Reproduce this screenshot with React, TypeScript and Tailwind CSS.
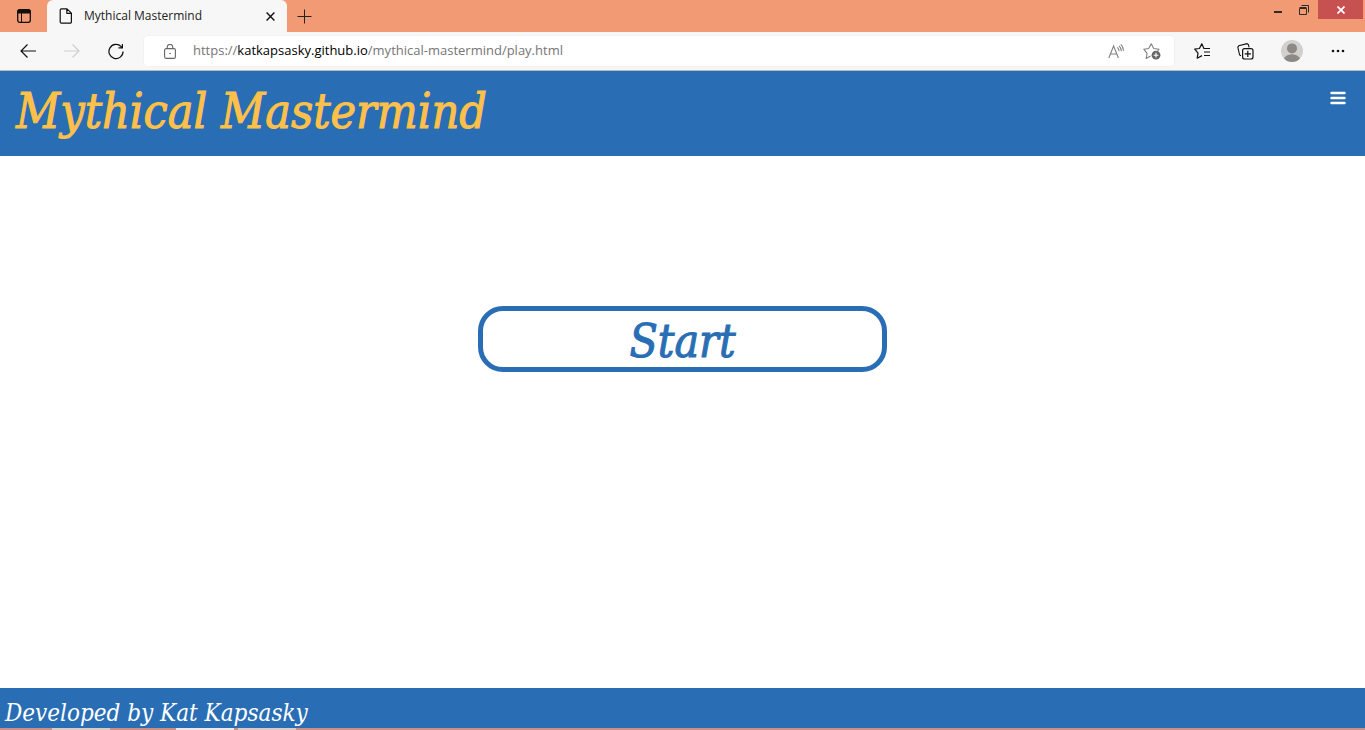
import React from "react";

const displayFont = "font-['DejaVu_Serif_Condensed','DejaVu_Serif',serif] italic";

function TabStrip() {
  return (
    <div className="flex h-8 items-stretch bg-[#f19a74]">
      <button type="button" aria-label="Tab actions" className="flex w-[47px] items-center justify-center rounded-br">
        <svg width="14" height="14" viewBox="0 0 14 14" fill="none" stroke="#111">
          <rect x="0.7" y="0.7" width="12.6" height="12.6" rx="2" strokeWidth="1.3" />
          <path d="M1 1h12v3H1z" fill="#111" />
          <path d="M4.5 4v9" />
        </svg>
      </button>
      <div className="flex w-60 items-center rounded-t-md bg-[#f7f7f7] pl-3 pr-[9px]">
        <svg width="14" height="16" viewBox="0 0 14 16" fill="none" stroke="#111" strokeWidth="1.2" strokeLinejoin="round">
          <path d="M3 .8h5l4.4 4.4V14a1.2 1.2 0 0 1-1.2 1.2H2.4A1.2 1.2 0 0 1 1.2 14V2A1.2 1.2 0 0 1 2.4.8zM7.8.8v4.5h4.6" />
        </svg>
        <span className="ml-[11px] flex-1 text-xs">Mythical Mastermind</span>
        <button type="button" aria-label="Close tab" className="flex size-4 items-center justify-center">
          <svg width="9" height="9" viewBox="0 0 9 9" stroke="#111" strokeWidth="1.4">
            <path d="M.6.6l7.8 7.8M8.4.6L.6 8.4" />
          </svg>
        </button>
      </div>
      <button type="button" aria-label="New tab" className="flex w-[35px] items-center justify-center">
        <svg width="15" height="15" viewBox="0 0 15 15" stroke="#222">
          <path d="M7.5 0.5v14M.5 7.5h14" />
        </svg>
      </button>
      <div className="ml-auto flex h-[19px] items-stretch pr-0.5">
        <button type="button" aria-label="Minimize" className="flex w-7 items-center justify-center">
          <svg width="8" height="11" viewBox="0 0 8 11" fill="#2b2b2b">
            <path d="M0 7h8v2H0z" />
          </svg>
        </button>
        <button type="button" aria-label="Restore" className="flex w-6 items-center justify-center">
          <svg width="10" height="10" viewBox="0 0 10 10" fill="none" stroke="#2b2b2b">
            <path d="M.5 3.5h7v6h-7zM.5 2.5h7M2.5.5h7v7" />
          </svg>
        </button>
        <button type="button" aria-label="Close window" className="ml-0.5 flex w-[45px] items-center justify-center bg-[#c75050]">
          <svg width="8" height="8" viewBox="0 0 8 8" stroke="white" strokeWidth="1.7">
            <path d="M.5.5l7 7M7.5.5l-7 7" />
          </svg>
        </button>
      </div>
    </div>
  );
}

function Toolbar() {
  return (
    <div className="flex h-[39px] items-center border-b border-[#b8bcc0] bg-[#f7f7f7]">
      <div className="flex w-36 items-center gap-7 pl-5">
        <button type="button" aria-label="Back">
          <svg width="16" height="14" viewBox="0 0 16 14" fill="none" stroke="#111" strokeWidth="1.2">
            <path d="M16 7H1M7.5.5L1 7l6.5 6.5" />
          </svg>
        </button>
        <button type="button" aria-label="Forward" disabled>
          <svg width="16" height="14" viewBox="0 0 16 14" fill="none" stroke="#cfcfcf" strokeWidth="1.2">
            <path d="M0 7h15M8.5.5L15 7l-6.5 6.5" />
          </svg>
        </button>
        <button type="button" aria-label="Refresh">
          <svg width="16" height="17" viewBox="0 0 17 17" fill="none" stroke="#111" strokeWidth="1.3">
            <path d="M16 8.5A7.5 7.5 0 1 1 14 3.4l1 1.1M15.3.5v4.2h-4.2" />
          </svg>
        </button>
      </div>
      <div className="flex h-[30px] min-w-0 flex-1 items-center rounded bg-white pl-5 pr-[13px] shadow-[0_0_2px_rgba(0,0,0,0.08)]">
        <svg width="12" height="15" viewBox="0 0 12 15" fill="none" stroke="#666" strokeWidth="1.1" className="shrink-0">
          <rect x=".6" y="4.6" width="10.8" height="9.8" rx="1.5" />
          <path d="M3.2 4.6V3.2a2.8 2.8 0 0 1 5.6 0v1.4" />
          <circle cx="6" cy="9.5" r=".8" fill="#666" stroke="none" />
        </svg>
        <a href="#play" className="ml-[17px] text-[13px] text-[#767676]">
          https://<span className="text-black">katkapsasky.github.io</span>/mythical-mastermind/play.html
        </a>
        <button type="button" aria-label="Read aloud" className="ml-auto">
          <svg width="17" height="15" viewBox="0 0 17 15" fill="none" stroke="#808080" strokeWidth="1.1">
            <path d="M.8 14L5.6 2l4.8 12M2.4 10h6.4M9.2 3.4a5 5 0 0 1 1.9 3.8M11 1.8a7 7 0 0 1 2.4 5.4M12.8.4a9 9 0 0 1 2.8 6.4" />
          </svg>
        </button>
        <button type="button" aria-label="Add to favorites" className="ml-[18px]">
          <svg width="18" height="17" viewBox="0 0 18 17" fill="none" stroke="#808080" strokeWidth="1.1" strokeLinejoin="round">
            <path d="M7.5 13l-4.3 2.5L4 10.4.8 6.2 5.7 5.5 8.2.8l2.5 4.7 5.4.7-1.4 1.6" />
            <circle cx="13" cy="12.2" r="4.4" fill="#666" stroke="none" />
            <path d="M13 9.8v4.8M10.6 12.2h4.8" stroke="white" />
          </svg>
        </button>
      </div>
      <div className="flex items-center pl-5 pr-5">
        <button type="button" aria-label="Favorites">
          <svg width="17" height="16" viewBox="0 0 17 16" fill="none" stroke="#111" strokeWidth="1.2" strokeLinejoin="round">
            <path d="M10 5.5h-.1L7.8.8 5.4 5.5.7 6.2l3.3 4-.8 5L8 12.6M9.8 5.5H16M10 9h6M10 12.5h6" />
          </svg>
        </button>
        <button type="button" aria-label="Collections" className="ml-[26px]">
          <svg width="17" height="17" viewBox="0 0 17 17" fill="none" stroke="#111" strokeWidth="1.1">
            <path d="M4 12.8L2.6 12 .8 4.1l1-1.4L10 .7l1.4.9.7 2.7" />
            <rect x="5.6" y="5.6" width="10.4" height="10.4" rx="2" fill="#f7f7f7" strokeWidth="1.2" />
            <path d="M10.8 7.7v6.2M7.7 10.8h6.2" strokeWidth="1.2" />
          </svg>
        </button>
        <button type="button" aria-label="Profile" className="ml-[27px]">
          <svg width="22" height="22" viewBox="0 0 22 22" fill="#8d8986">
            <defs>
              <clipPath id="avatar"><circle cx="11" cy="11" r="11" /></clipPath>
            </defs>
            <circle cx="11" cy="11" r="11" fill="#d2d0cd" />
            <g clipPath="url(#avatar)">
              <circle cx="11" cy="8.4" r="5" />
              <ellipse cx="11" cy="19.5" rx="8" ry="5.2" />
            </g>
          </svg>
        </button>
        <button type="button" aria-label="Settings and more" className="ml-7">
          <svg width="14" height="4" viewBox="0 0 14 4" fill="#111">
            <circle cx="2" cy="2" r="1.3" />
            <circle cx="7" cy="2" r="1.3" />
            <circle cx="12" cy="2" r="1.3" />
          </svg>
        </button>
      </div>
    </div>
  );
}

export default function App() {
  return (
    <div className="flex min-h-screen flex-col bg-white font-['Open_Sans','Noto_Sans',sans-serif] text-[#222]">
      <TabStrip />
      <Toolbar />
      <header className="flex items-start justify-between bg-[#296eb4] px-4 pb-4 pt-3">
        <h1 className={`${displayFont} text-5xl font-normal leading-[57px] text-[#fdc04b] [-webkit-text-stroke:1px_#fdc04b]`}>
          Mythical Mastermind
        </h1>
        <button type="button" aria-label="Menu" className="mr-[3px] mt-2">
          <svg width="16" height="14" viewBox="0 0 16 14" stroke="white" strokeWidth="2.4" strokeLinecap="round">
            <path d="M1.5 2h13M1.5 7h13M1.5 12h13" />
          </svg>
        </button>
      </header>
      <main className="flex flex-1 flex-col items-center pt-[150px]">
        <button
          type="button"
          className={`${displayFont} h-[66px] w-[30%] rounded-[25px] border-[5px] border-[#296eb4] bg-white pt-1 text-[46px] leading-[52px] text-[#296eb4] [-webkit-text-stroke:1px_#296eb4]`}
        >
          Start
        </button>
      </main>
      <footer className="h-10 bg-[#296eb4] px-[5px] pt-[9px] text-white">
        <p className={`${displayFont} text-2xl leading-8`}>Developed by Kat Kapsasky</p>
      </footer>
      <div className="flex h-0.5 bg-[#c98f88]">
        <div className="ml-[52px] w-[58px] bg-[#dccac6]" />
        <div className="ml-[66px] w-[58px] bg-[#f0e8e6]" />
        <div className="ml-1 w-[58px] bg-[#dccac6]" />
      </div>
    </div>
  );
}
